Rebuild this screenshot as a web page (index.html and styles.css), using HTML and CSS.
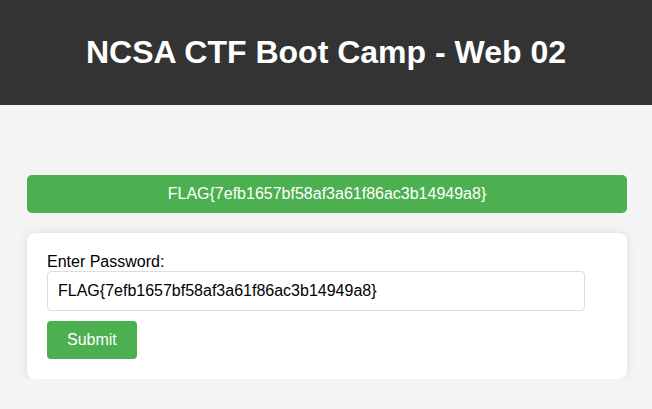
FILE: index.html
```html
<!DOCTYPE html>
<html>
<head>
<meta charset="utf-8">
<link rel="stylesheet" href="styles.css">
</head>
<body>
<header class="site-header">
  <h1 class="title">NCSA CTF Boot Camp - Web 02</h1>
</header>
<main class="container">
  <div class="flag">FLAG{7efb1657bf58af3a61f86ac3b14949a8}</div>
  <form class="card">
    <label class="label" for="pw">Enter Password:</label>
    <input class="input" id="pw" type="text" value="FLAG{7efb1657bf58af3a61f86ac3b14949a8}">
    <button class="btn" type="button">Submit</button>
  </form>
</main>
</body>
</html>
```
FILE: styles.css
```css
html, body {
  margin: 0;
  padding: 0;
}
body {
  background: #f4f4f4;
  font-family: "Liberation Sans", Arial, sans-serif;
  color: #000;
}
.site-header {
  background: #333;
  height: 105px;
  display: flex;
  align-items: center;
  justify-content: center;
}
.title {
  margin: 0;
  color: #fff;
  font-size: 32px;
  font-weight: bold;
  line-height: 37px;
}
.container {
  width: 600px;
  margin: 70px 0 0 27px;
}
.flag {
  background: #4caf50;
  color: #fff;
  text-align: center;
  font-size: 16px;
  height: 38px;
  line-height: 38px;
  border-radius: 5px;
}
.card {
  margin-top: 20px;
  background: #fff;
  border-radius: 8px;
  padding: 20px;
  box-shadow: 0 0 10px rgba(0,0,0,0.1);
  display: flex;
  flex-direction: column;
  align-items: flex-start;
}
.label {
  font-size: 16px;
  line-height: 18px;
}
.input {
  box-sizing: border-box;
  width: 538px;
  height: 40px;
  padding: 0 10px;
  border: 1px solid #ddd;
  border-radius: 4px;
  font-family: "Liberation Sans", Arial, sans-serif;
  font-size: 16px;
  color: #000;
  margin: 0 0 10px;
  outline: none;
}
.btn {
  background: #4caf50;
  color: #fff;
  border: none;
  border-radius: 4px;
  padding: 0 20px;
  height: 38px;
  font-family: "Liberation Sans", Arial, sans-serif;
  font-size: 16px;
}
```
